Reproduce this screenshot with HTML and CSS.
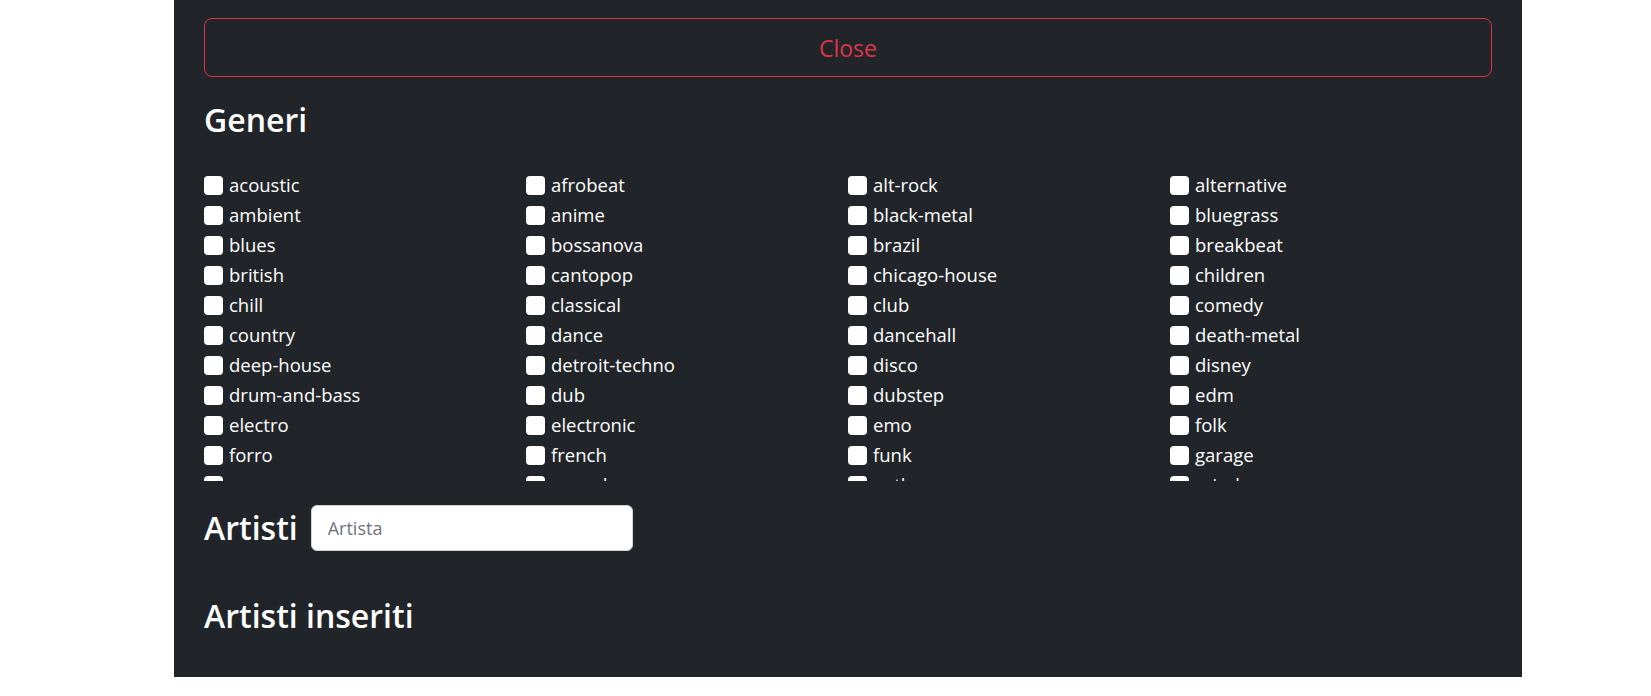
FILE: index.html
```html
<!DOCTYPE html>
<html lang="it">
<head>
<meta charset="utf-8">
<title>Generi</title>
<link rel="stylesheet" href="styles.css">
</head>
<body>
<div class="panel">
  <button class="btn-close-outline" type="button">Close</button>
  <h2 class="title title-generi">Generi</h2>
  <div class="genre-list" id="genres"></div>
  <div class="artist-row">
    <h2 class="title">Artisti</h2>
    <input class="artist-input" type="text" placeholder="Artista">
  </div>
  <h2 class="title title-inserted">Artisti inseriti</h2>
</div>
<script src="app.js"></script>
</body>
</html>
```

FILE: app.js
```js
const genres = ["acoustic","afrobeat","alt-rock","alternative","ambient","anime","black-metal","bluegrass","blues","bossanova","brazil","breakbeat","british","cantopop","chicago-house","children","chill","classical","club","comedy","country","dance","dancehall","death-metal","deep-house","detroit-techno","disco","disney","drum-and-bass","dub","dubstep","edm","electro","electronic","emo","folk","forro","french","funk","garage","german","gospel","goth","grindcore","groove","grunge","guitar","happy","hard-rock","hardcore","hardstyle","heavy-metal","hip-hop","holidays","honky-tonk","house","idm","indian","indie","indie-pop","industrial","iranian","j-dance","j-idol","j-pop","j-rock","jazz","k-pop","kids","latin","latino","malay","mandopop","metal","metal-misc","metalcore","minimal-techno","movies","mpb","new-age","new-release","opera","pagode","party","philippines-opm","piano","pop","pop-film","post-dubstep","power-pop","progressive-house","psych-rock","punk","punk-rock","r-n-b","rainy-day","reggae","reggaeton","road-trip","rock","rock-n-roll","rockabilly","romance","sad","salsa","samba","sertanejo","show-tunes","singer-songwriter","ska","sleep","songwriter","soul","soundtracks","spanish","study","summer","swedish","synth-pop","tango","techno","trance","trip-hop","turkish","work-out","world-music"];
const list = document.getElementById('genres');
genres.forEach(g => {
  const label = document.createElement('label');
  label.className = 'genre';
  const cb = document.createElement('input');
  cb.type = 'checkbox';
  cb.className = 'genre-check';
  const span = document.createElement('span');
  span.textContent = g;
  label.appendChild(cb);
  label.appendChild(span);
  list.appendChild(label);
});
```

FILE: styles.css
```css
html, body {
  margin: 0;
  padding: 0;
  background: #fff;
}
body {
  font-family: "Open Sans", "Noto Sans", sans-serif;
}
.panel {
  margin: 0 129px 0 174px;
  background: #212529;
  color: #fff;
  padding: 18px 30px 0;
  height: 659px;
}
.btn-close-outline {
  display: block;
  width: 100%;
  height: 59px;
  background: transparent;
  border: 1px solid #dc3545;
  border-radius: 8px;
  color: #dc3545;
  font-family: "Open Sans", sans-serif;
  font-size: 23px;
  cursor: pointer;
}
.title {
  margin: 0;
  font-size: 32px;
  font-weight: 600;
  line-height: 1.2;
}
.title-generi {
  margin-top: 24px;
}
.genre-list {
  margin-top: 31px;
  height: 311px;
  overflow-y: auto;
  scrollbar-width: none;
  display: grid;
  grid-template-columns: repeat(4, 1fr);
  grid-auto-rows: 30px;
  align-content: start;
}
.genre-list::-webkit-scrollbar { display: none; }
.genre {
  display: flex;
  align-items: center;
  font-size: 18.5px;
  line-height: 30px;
}
.genre-check {
  appearance: none;
  -webkit-appearance: none;
  width: 19px;
  height: 19px;
  margin: 0 6px 0 0;
  background: #fff;
  border-radius: 4px;
  flex: none;
}
.artist-row {
  display: flex;
  align-items: center;
  gap: 13px;
  margin-top: 24px;
}
.artist-input {
  width: 322px;
  height: 46px;
  box-sizing: border-box;
  border: 1px solid #ced4da;
  border-radius: 6px;
  padding: 0 16px;
  font-family: "Open Sans", sans-serif;
  font-size: 18px;
  color: #212529;
}
.artist-input::placeholder {
  color: #6c757d;
}
.title-inserted {
  margin-top: 46px;
}
```
